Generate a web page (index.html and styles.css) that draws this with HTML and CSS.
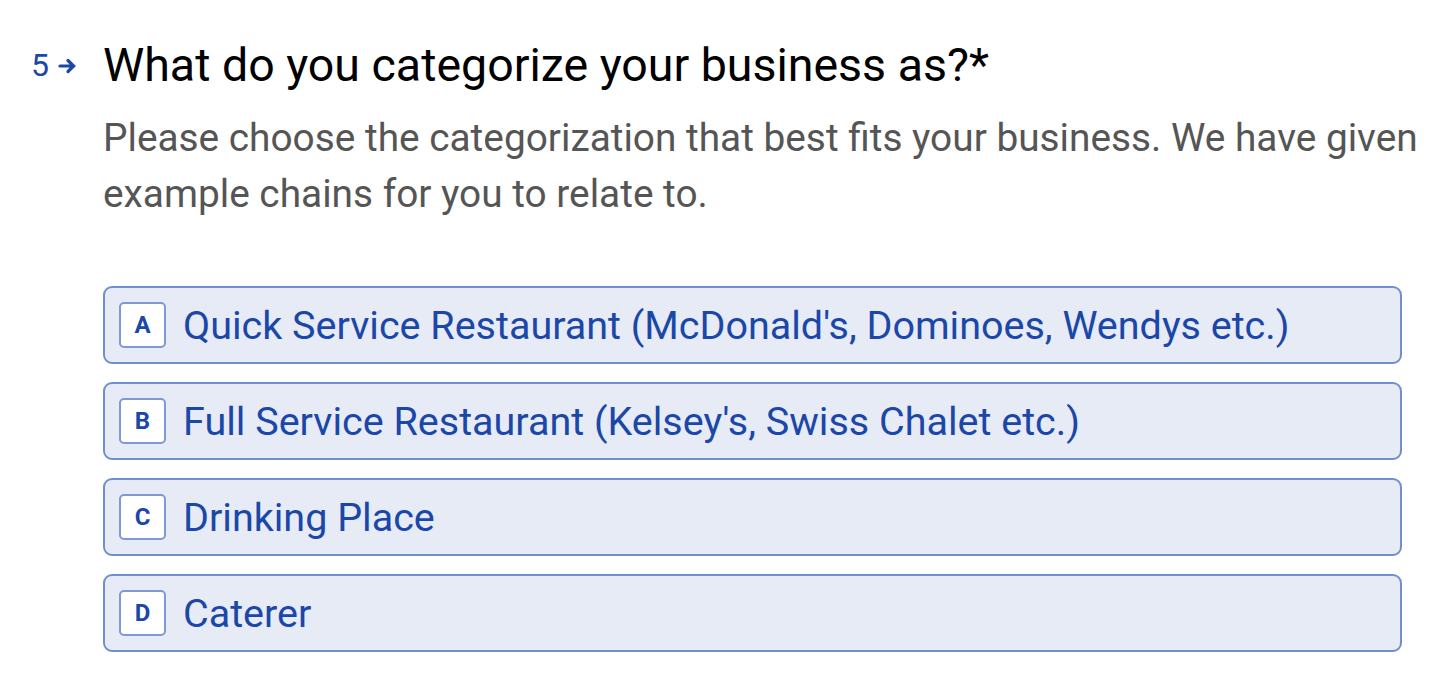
FILE: index.html
```html
<!DOCTYPE html>
<html lang="en">
<head>
<meta charset="utf-8">
<link rel="stylesheet" href="styles.css">
</head>
<body>
<div class="question">
  <div class="qnum"><span>5</span><svg class="arrow" width="19" height="16" viewBox="0 0 19 16"><path d="M2 8h14M10 2.5l5.5 5.5-5.5 5.5" fill="none" stroke="currentColor" stroke-width="3.2" stroke-linecap="round" stroke-linejoin="round"/></svg></div>
  <div class="qbody">
    <h1 class="title">What do you categorize your business as?*</h1>
    <p class="desc">Please choose the categorization that best fits your business. We have given example chains for you to relate to.</p>
    <div class="options">
      <div class="option"><span class="key">A</span><span class="label">Quick Service Restaurant (McDonald's, Dominoes, Wendys etc.)</span></div>
      <div class="option"><span class="key">B</span><span class="label">Full Service Restaurant (Kelsey's, Swiss Chalet etc.)</span></div>
      <div class="option"><span class="key">C</span><span class="label">Drinking Place</span></div>
      <div class="option"><span class="key">D</span><span class="label">Caterer</span></div>
    </div>
  </div>
</div>
</body>
</html>
```
FILE: styles.css
```css
html, body { margin: 0; padding: 0; background: #fff; }
body { font-family: Roboto, "Noto Sans", sans-serif; }
.question { display: flex; padding: 36px 0 0 0; }
.qnum { width: 103px; display: flex; justify-content: flex-end; align-items: center; gap: 9px; padding-right: 26px; box-sizing: border-box; color: #1a47a8; font-size: 32px; height: 58px; }
.arrow { color: #1a47a8; margin-top: 2px; }
.qbody { flex: 1; padding-right: 4px; }
.title { margin: 0; font-weight: 400; font-size: 46.5px; line-height: 58px; color: #000; }
.desc { margin: 16px 0 0 0; font-size: 38.8px; line-height: 56px; color: #555; }
.options { margin-top: 64px; display: flex; flex-direction: column; gap: 18px; width: 1299px; }
.option { display: flex; align-items: center; gap: 17px; height: 78px; box-sizing: border-box; border: 2px solid #6f8fd0; border-radius: 9px; background: #e7ebf6; padding: 0 14px; color: #1a47a8; }
.key { width: 47px; height: 46px; box-sizing: border-box; border: 2px solid #7d9ad6; border-radius: 5px; background: #fff; display: flex; align-items: center; justify-content: center; font-size: 24px; font-weight: 700; }
.label { font-size: 39.5px; }
```
